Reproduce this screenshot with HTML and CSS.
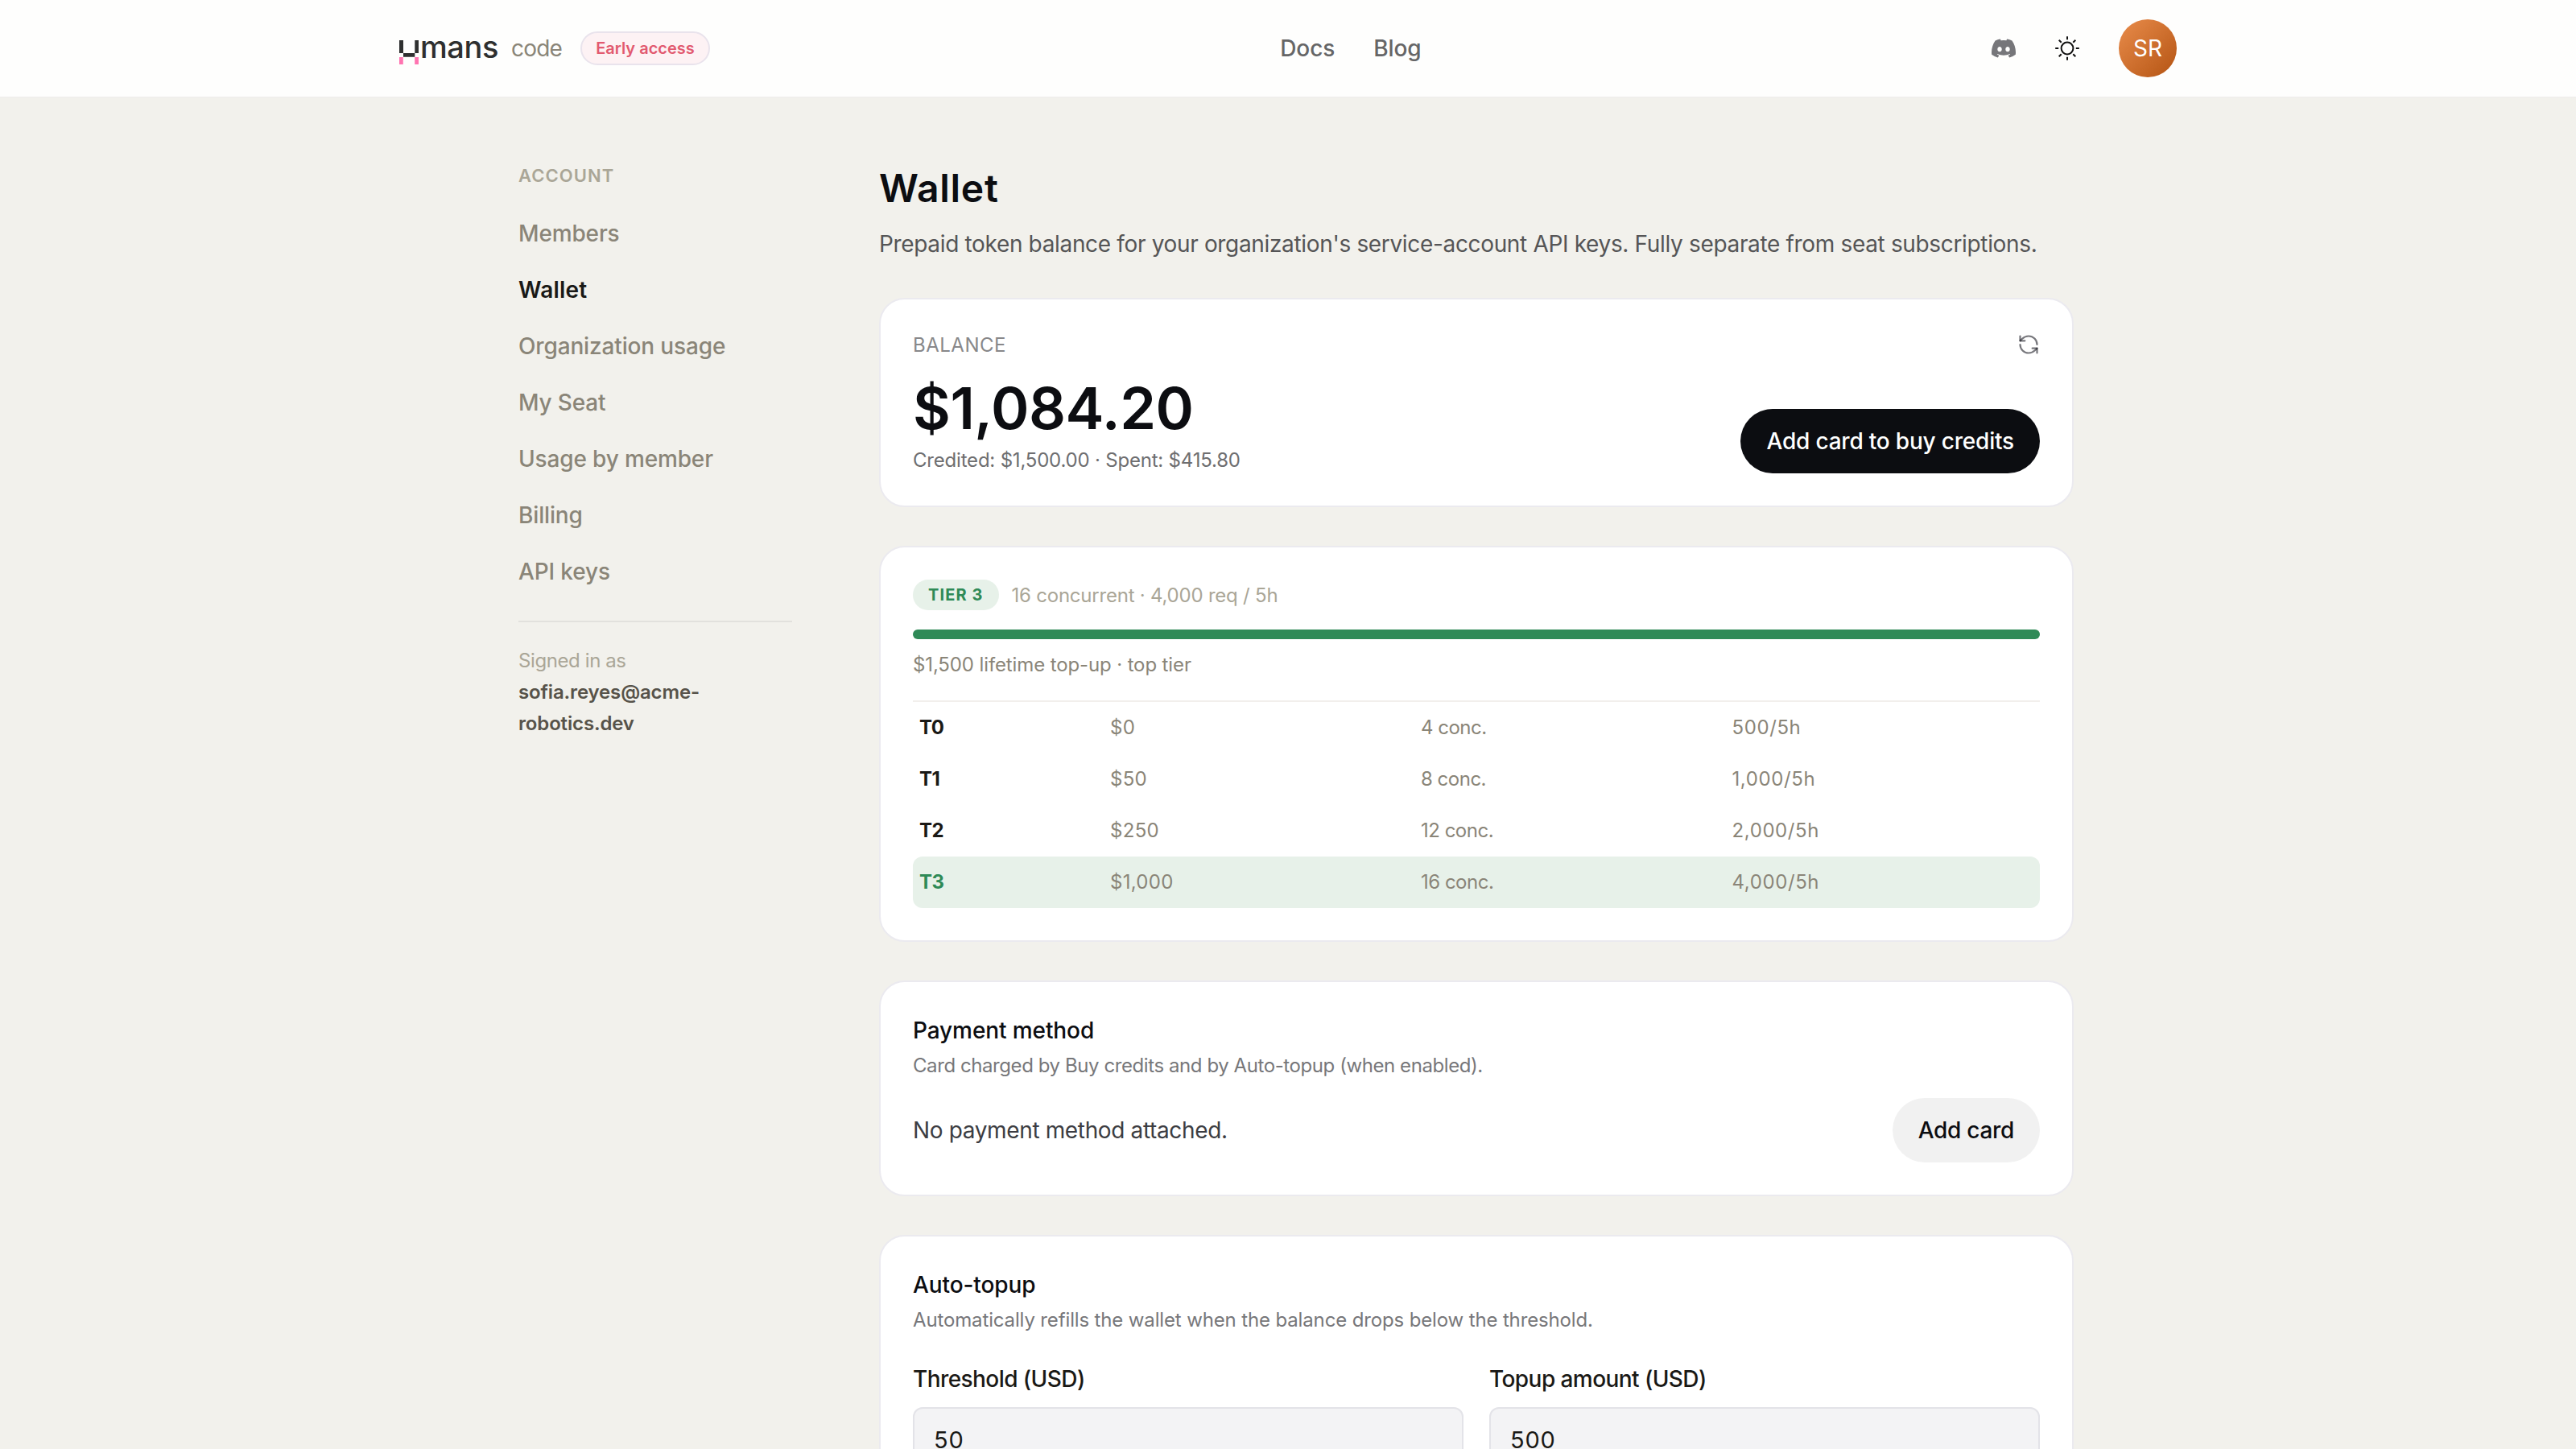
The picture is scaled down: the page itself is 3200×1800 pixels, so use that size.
FILE: index.html
```html
<!DOCTYPE html>
<html lang="en">
<head>
    <meta charset="UTF-8">
    <meta name="viewport" content="width=device-width, initial-scale=1.0">
    <title>Wallet</title>
    <link rel="stylesheet" href="styles.css">
</head>
<body>
    <!-- Header -->
    <header class="header">
        <div class="header-inner">
            <div class="brand">
                <a class="logo" href="#">
                    <svg class="logo-mark" width="24" height="30" viewBox="0 0 24 30">
                        <path fill="#2e2f2f" d="M0 0h5v16h14.3V0H24v16h-4.7v4.7H5V16H0z"/>
                        <path fill="#ff74b1" d="M0 21h4.8v9H0zM19.2 21H24v9h-4.8z"/>
                    </svg>
                    <span class="logo-text">mans</span>
                </a>
                <span class="product">code</span>
                <span class="badge">Early access</span>
            </div>
            <nav class="menu">
                <a href="#">Docs</a>
                <a href="#">Blog</a>
            </nav>
            <div class="actions">
                <svg width="30" height="30" viewBox="0 0 24 24" fill="#76767a">
                    <path d="M20.317 4.37a19.79 19.79 0 0 0-4.885-1.515.074.074 0 0 0-.079.037c-.21.375-.444.864-.608 1.25a18.27 18.27 0 0 0-5.487 0 12.64 12.64 0 0 0-.617-1.25.077.077 0 0 0-.079-.037A19.736 19.736 0 0 0 3.677 4.37a.07.07 0 0 0-.032.027C.533 9.046-.32 13.58.099 18.057a.082.082 0 0 0 .031.057 19.9 19.9 0 0 0 5.993 3.03.078.078 0 0 0 .084-.028c.462-.63.874-1.295 1.226-1.994a.076.076 0 0 0-.041-.106 13.1 13.1 0 0 1-1.872-.892.077.077 0 0 1-.008-.128c.126-.094.252-.192.372-.292a.074.074 0 0 1 .077-.01c3.928 1.793 8.18 1.793 12.062 0a.074.074 0 0 1 .078.01c.12.098.246.198.373.292a.077.077 0 0 1-.006.127 12.3 12.3 0 0 1-1.873.892.077.077 0 0 0-.041.107c.36.698.772 1.362 1.225 1.993a.076.076 0 0 0 .084.028 19.84 19.84 0 0 0 6.002-3.03.077.077 0 0 0 .032-.054c.5-5.177-.838-9.674-3.549-13.66a.06.06 0 0 0-.031-.03zM8.02 15.33c-1.183 0-2.157-1.085-2.157-2.419s.955-2.419 2.157-2.419c1.21 0 2.176 1.096 2.157 2.42 0 1.333-.956 2.418-2.157 2.418zm7.975 0c-1.183 0-2.157-1.085-2.157-2.419s.955-2.419 2.157-2.419c1.21 0 2.176 1.096 2.157 2.42 0 1.333-.946 2.418-2.157 2.418z"/>
                </svg>
                <svg width="30" height="30" viewBox="0 0 30 30" fill="none" stroke="#111" stroke-width="2">
                    <circle cx="15" cy="15" r="7.4"/>
                    <path d="M15 0.2v4M15 25.8v4M0.2 15h4M25.8 15h4M4.7 4.7l3 3M22.3 22.3l3 3M4.7 25.3l3-3M22.3 7.7l3-3"/>
                </svg>
                <span class="avatar">SR</span>
            </div>
        </div>
    </header>

    <div class="page">
        <!-- Sidebar -->
        <aside class="sidebar">
            <div class="sidebar-title">ACCOUNT</div>
            <a href="#">Members</a>
            <a href="#" class="active">Wallet</a>
            <a href="#">Organization usage</a>
            <a href="#">My Seat</a>
            <a href="#">Usage by member</a>
            <a href="#">Billing</a>
            <a href="#">API keys</a>
            <div class="signed-in">
                <div class="signed-label">Signed in as</div>
                <div class="signed-email">sofia.reyes@acme-robotics.dev</div>
            </div>
        </aside>

        <!-- Main Content -->
        <main class="content">
            <h1>Wallet</h1>
            <p class="subtitle">Prepaid token balance for your organization's service-account API keys. Fully separate from seat subscriptions.</p>

            <!-- Balance -->
            <section class="card">
                <div class="balance-head">
                    <span class="balance-label">BALANCE</span>
                    <svg width="28" height="28" viewBox="0 0 24 24" fill="none" stroke="rgba(10, 10, 18, 0.55)" stroke-width="1.9" stroke-linecap="round" stroke-linejoin="round">
                        <path d="M21 12a9 9 0 0 0-9-9 9.75 9.75 0 0 0-6.74 2.74L3 8"/>
                        <path d="M3 3v5h5"/>
                        <path d="M3 12a9 9 0 0 0 9 9 9.75 9.75 0 0 0 6.74-2.74L21 16"/>
                        <path d="M16 16h5v5"/>
                    </svg>
                </div>
                <div class="balance-body">
                    <div>
                        <div class="amount">$1,084.20</div>
                        <div class="credited">Credited: $1,500.00 · Spent: $415.80</div>
                    </div>
                    <button class="btn btn-dark">Add card to buy credits</button>
                </div>
            </section>

            <!-- Tiers -->
            <section class="card">
                <div class="tier-head">
                    <span class="tier-badge">TIER 3</span>
                    <span class="tier-limits">16 concurrent · 4,000 req / 5h</span>
                </div>
                <div class="progress"></div>
                <div class="tier-note">$1,500 lifetime top-up · top tier</div>
                <div class="tiers">
                    <div class="tier-row"><b>T0</b><span>$0</span><span>4 conc.</span><span>500/5h</span></div>
                    <div class="tier-row"><b>T1</b><span>$50</span><span>8 conc.</span><span>1,000/5h</span></div>
                    <div class="tier-row"><b>T2</b><span>$250</span><span>12 conc.</span><span>2,000/5h</span></div>
                    <div class="tier-row current"><b>T3</b><span>$1,000</span><span>16 conc.</span><span>4,000/5h</span></div>
                </div>
            </section>

            <!-- Payment method -->
            <section class="card">
                <h2>Payment method</h2>
                <p class="hint hint-payment">Card charged by Buy credits and by Auto-topup (when enabled).</p>
                <div class="payment-row">
                    <span>No payment method attached.</span>
                    <button class="btn btn-light">Add card</button>
                </div>
            </section>

            <!-- Auto-topup -->
            <section class="card">
                <h2>Auto-topup</h2>
                <p class="hint">Automatically refills the wallet when the balance drops below the threshold.</p>
                <div class="fields">
                    <label>Threshold (USD)
                        <input type="text" value="50">
                    </label>
                    <label>Topup amount (USD)
                        <input type="text" value="500">
                    </label>
                </div>
            </section>
        </main>
    </div>
</body>
</html>
```
FILE: styles.css
```css
/* General Styles */
* {
    box-sizing: border-box;
}

body {
    font-family: Inter, "Liberation Sans", sans-serif;
    font-size: 28px;
    margin: 0;
    height: 100vh;
    overflow: hidden;
    background: #f2f1ec;
    color: #0c0d11;
}

h1, h2, p {
    margin: 0;
}

a {
    text-decoration: none;
}

svg {
    display: block;
    flex-shrink: 0;
}

/* Header */
.header {
    background: #fefefd;
    border-bottom: 2px solid #f0efec;
}

.header-inner {
    display: flex;
    justify-content: space-between;
    align-items: center;
    width: 2208px;
    height: 120px;
    margin: 0 auto;
}

.brand {
    display: flex;
    align-items: center;
}

.logo {
    display: flex;
    gap: 2px;
    height: 40px;
}

.logo-mark {
    align-self: flex-end;
}

.logo-text {
    font-size: 38px;
    font-weight: 500;
    line-height: 36px;
    letter-spacing: -0.4px;
    color: #2e2f2f;
}

.product {
    margin-left: 16px;
    letter-spacing: -0.8px;
    color: #8a8578;
}

.badge {
    display: flex;
    align-items: center;
    height: 42px;
    margin-left: 23px;
    padding: 0 17px;
    border: 2px solid #e9e3ec;
    border-radius: 21px;
    background: #fdf2f4;
    font-size: 20px;
    font-weight: 600;
    color: #e25a70;
}

.menu {
    display: flex;
    gap: 48px;
}

.menu a {
    font-weight: 500;
    letter-spacing: -0.1px;
    color: #666667;
}

.actions {
    display: flex;
    align-items: center;
    gap: 49px;
}

.avatar {
    display: flex;
    align-items: center;
    justify-content: center;
    width: 72px;
    height: 72px;
    border-radius: 50%;
    background: linear-gradient(135deg, #e98c4b, #b45413);
    color: #fff;
}

/* Page Layout */
.page {
    display: flex;
    justify-content: space-between;
    width: 1952px;
    height: calc(100vh - 122px);
    margin: 0 auto;
    padding-top: 78px;
    overflow: hidden;
}

/* Sidebar */
.sidebar {
    display: flex;
    flex-direction: column;
    width: 360px;
    padding-left: 20px;
}

.sidebar-title {
    margin-bottom: 18px;
    font-size: 22px;
    font-weight: 600;
    line-height: 37px;
    letter-spacing: 1.05px;
    color: #aaa697;
}

.sidebar a {
    padding: 16px 0;
    font-weight: 500;
    line-height: 38px;
    letter-spacing: -0.15px;
    color: #8a8578;
}

.sidebar a.active {
    font-weight: 600;
    letter-spacing: 0.2px;
    color: #1a1916;
}

.signed-in {
    margin-top: 26px;
    padding-top: 29px;
    border-top: 2px solid #e2e1dd;
    font-size: 24px;
    line-height: 38.8px;
}

.signed-label {
    letter-spacing: -0.4px;
    color: #aaa697;
}

.signed-email {
    width: 300px;
    font-weight: 600;
    letter-spacing: -0.15px;
    color: #57534a;
}

/* Main Content */
.content {
    width: 1484px;
}

h1 {
    font-size: 48px;
    font-weight: 600;
    line-height: 68px;
    letter-spacing: 0.7px;
}

.subtitle {
    margin: 13px 0 45px;
    line-height: 44px;
    letter-spacing: -0.34px;
    white-space: nowrap;
    color: #555556;
}

.card {
    margin-bottom: 48px;
    padding: 40px;
    border: 2px solid #ebeaef;
    border-radius: 32px;
    background: #fff;
}

h2 {
    font-size: 28px;
    font-weight: 500;
    line-height: 40px;
    letter-spacing: -0.1px;
}

.hint {
    margin-top: 6px;
    font-size: 24px;
    line-height: 36px;
    letter-spacing: -0.14px;
    color: #77777a;
}

.hint-payment {
    letter-spacing: -0.42px;
}

.btn {
    height: 80px;
    padding: 0 32px;
    border: none;
    border-radius: 40px;
    font-family: inherit;
    font-size: 28px;
    font-weight: 500;
    letter-spacing: -0.3px;
}

.btn-dark {
    letter-spacing: -0.2px;
    background: #0c0d11;
    color: #fff;
}

.btn-light {
    background: #f1f1f1;
    color: #0c0d11;
}

/* Balance */
.balance-head {
    display: flex;
    justify-content: space-between;
    align-items: center;
    height: 32px;
}

.balance-label {
    font-size: 24px;
    letter-spacing: 0.5px;
    color: #88888a;
}

.balance-body {
    display: flex;
    justify-content: space-between;
    align-items: flex-end;
    margin-top: 27px;
}

.amount {
    font-size: 72px;
    font-weight: 600;
    line-height: 72px;
    letter-spacing: -0.45px;
}

.credited {
    margin-top: 12px;
    font-size: 24px;
    line-height: 33px;
    letter-spacing: -0.2px;
    color: #6e6e70;
}

/* Tiers */
.tier-head {
    display: flex;
    align-items: center;
    gap: 16px;
}

.tier-badge {
    height: 38px;
    padding: 0 19px;
    border-radius: 19px;
    background: #e7f1e9;
    font-size: 20px;
    font-weight: 700;
    line-height: 38px;
    letter-spacing: 1.1px;
    color: #2f8a57;
}

.tier-limits {
    font-size: 24px;
    letter-spacing: -0.22px;
    color: #aaa697;
}

.progress {
    height: 12px;
    margin-top: 24px;
    border-radius: 6px;
    background: #2f8a57;
}

.tier-note {
    margin: 13px 0 25px;
    font-size: 24px;
    line-height: 38px;
    letter-spacing: -0.12px;
    color: #8a8578;
}

.tiers {
    border-top: 2px solid #f2efec;
    font-size: 24px;
}

.tier-row {
    display: grid;
    grid-template-columns: 237px 386px 386.5px 1fr;
    padding-left: 8px;
    border-radius: 12px;
    line-height: 64px;
    color: #8a8578;
}

.tier-row b {
    letter-spacing: -0.5px;
    color: #1a1916;
}

.tier-row span {
    letter-spacing: 0.3px;
}

.tier-row span:nth-child(3) {
    letter-spacing: -0.5px;
}

.tier-row span:nth-child(4) {
    letter-spacing: 0.6px;
}

.tier-row.current {
    background: #e7f1e9;
}

.tier-row.current b {
    color: #2f8a57;
}

/* Payment method */
.payment-row {
    display: flex;
    justify-content: space-between;
    align-items: center;
    margin-top: 22px;
    letter-spacing: -0.36px;
    color: #3c3d42;
}

/* Auto-topup */
.fields {
    display: grid;
    grid-template-columns: 1fr 1fr;
    gap: 32px;
    margin-top: 35px;
}

.fields label {
    font-weight: 500;
    line-height: 40px;
    letter-spacing: -0.57px;
    color: #1a1916;
}

.fields input {
    display: block;
    width: 100%;
    height: 80px;
    margin-top: 15px;
    padding: 0 24px;
    border: 2px solid #e3e3e8;
    border-radius: 12px;
    background: #f3f3f5;
    font-family: inherit;
    font-size: 29px;
    letter-spacing: 0.8px;
    color: #1a1916;
}
```
